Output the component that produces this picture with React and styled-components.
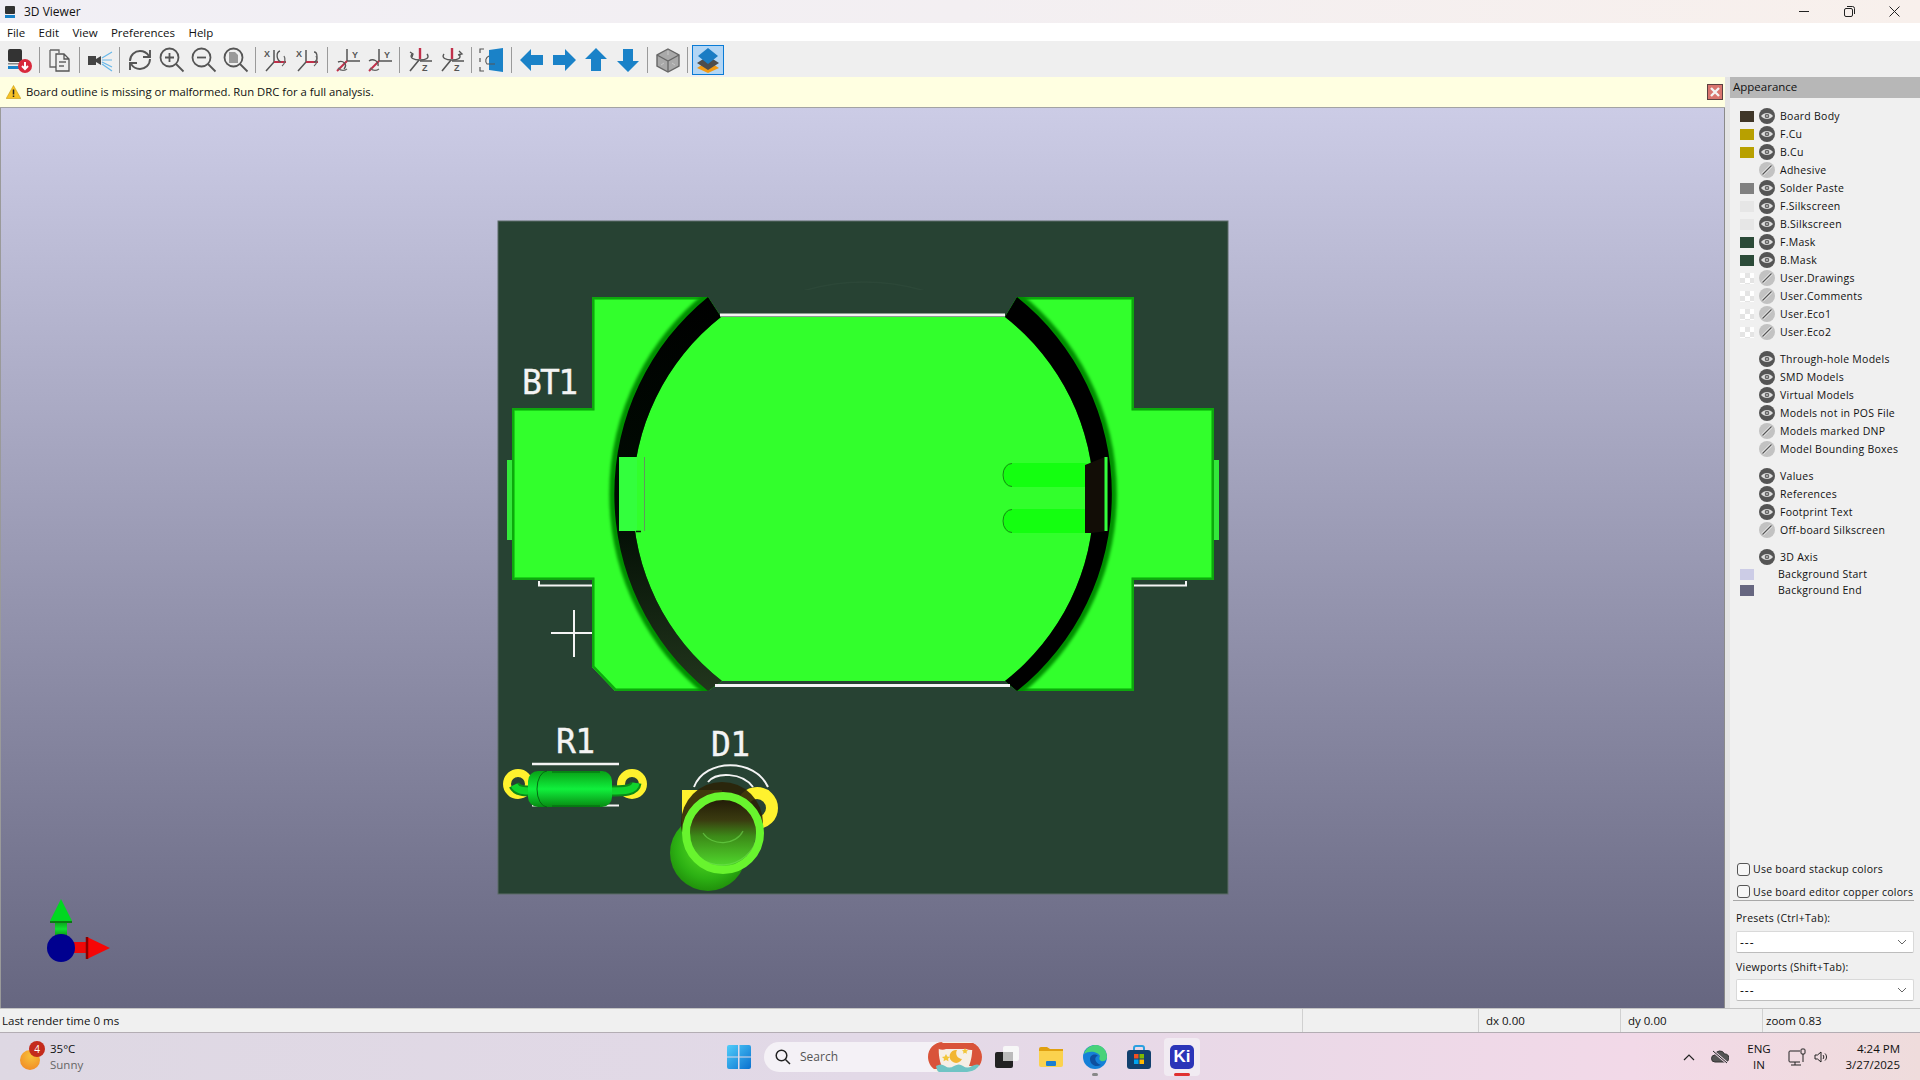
import React from "react"
import styled, { createGlobalStyle } from "styled-components"

const GlobalStyle = createGlobalStyle`
  html, body { margin: 0; padding: 0; background: #f0f0f0; overflow: hidden; }
  * { box-sizing: border-box; }
  #root { width: 1920px; height: 1080px; }
`

const UI_FONT = `"Open Sans", "Noto Sans", "Liberation Sans", sans-serif`

const Page = styled.div`
  width: 1920px;
  height: 1080px;
  display: flex;
  flex-direction: column;
  font-family: ${UI_FONT};
  font-size: 11.5px;
  color: #111;
  overflow: hidden;
`

const TitleBar = styled.div`
  height: 23px;
  flex: none;
  display: flex;
  align-items: center;
  padding-left: 5px;
  background: linear-gradient(90deg, #f1eff5 0%, #f3eff2 50%, #f8f0ec 100%);
  span { margin-left: 9px; font-size: 12px; }
`

const WindowButtons = styled.div`
  margin-left: auto;
  padding-right: 3px;
  display: flex;
  align-items: center;
`

const WindowButton = styled.div`
  width: 45px;
  height: 23px;
  display: flex;
  align-items: center;
  justify-content: center;
`

const MenuBar = styled.div`
  height: 18px;
  flex: none;
  display: flex;
  align-items: center;
  background: #fff;
  padding: 1px 0 0 7px;
  gap: 13.4px;
  font-size: 11.5px;
  span { line-height: 17px; }
`

const Toolbar = styled.div`
  height: 36px;
  flex: none;
  display: flex;
  align-items: center;
  background: #efefef;
  padding: 1px 0 0 4px;
`

const ToolButton = styled.div`
  width: 32px;
  height: 30px;
  display: flex;
  align-items: center;
  justify-content: center;
  border: 1px solid ${p => (p.$active ? "#0a7bd6" : "transparent")};
  background: ${p => (p.$active ? "#b3d6f5" : "transparent")};
`

const ToolSep = styled.div`
  width: 8px;
  height: 26px;
  flex: none;
  display: flex;
  justify-content: center;
  &::before { content: ""; width: 1px; height: 100%; background: #9a9a9a; margin-right: 1px; }
`

const Main = styled.div`
  flex: 1;
  min-height: 0;
  display: flex;
`

const ViewColumn = styled.div`
  width: 1725px;
  flex: none;
  display: flex;
  flex-direction: column;
`

const InfoBar = styled.div`
  height: 31px;
  flex: none;
  display: flex;
  align-items: center;
  padding: 0 2px 1px 6px;
  background: #ffffe1;
  border-bottom: 1px solid #a3a3a3;
  font-size: 11.3px;
  span { margin-left: 5px; }
`

const InfoClose = styled.div`
  margin-left: auto;
  width: 16px;
  height: 16px;
  display: flex;
  align-items: center;
  justify-content: center;
  background: #d9756e;
  border: 1px solid #5a4040;
`

const Viewport = styled.div`
  flex: 1;
  min-height: 0;
  background: linear-gradient(180deg, #cccce6 0%, #666680 100%);
  border-left: 1px solid #9a9a9a;
  border-right: 1px solid #8a8a8a;
  svg { display: block; width: 1725px; height: 900px; margin-left: -1px; }
`

const Sash = styled.div`
  width: 5px;
  flex: none;
  background: #e4e4e4;
`

const Panel = styled.div`
  flex: 1;
  min-width: 0;
  display: flex;
  flex-direction: column;
  background: #f0f0f0;
`

const PanelTitle = styled.div`
  height: 21px;
  flex: none;
  display: flex;
  align-items: center;
  padding: 0 0 2px 3px;
  background: #b7b7b7;
  font-size: 11.5px;
`

const LayerList = styled.div`
  padding: 9px 0 0 10px;
  display: flex;
  flex-direction: column;
  gap: 9px;
`

const LayerGroup = styled.div`
  display: flex;
  flex-direction: column;
`

const LayerRow = styled.div`
  height: ${p => (p.$short ? "16px" : "18px")};
  display: flex;
  align-items: center;
  font-size: 10.5px;
  letter-spacing: 0.27px;
`

const Swatch = styled.div`
  width: 14px;
  height: 11px;
  flex: none;
  margin-right: 5px;
  background: ${p => p.$color || "transparent"};
  ${p => p.$checker && `
    background: repeating-conic-gradient(#e4e4e4 0 25%, #ffffff 0 50%);
    background-size: 10px 10px;
  `}
`

const EyeSlot = styled.div`
  width: 16px;
  height: 16px;
  flex: none;
  margin-right: 5px;
  svg { display: block; }
`

const LayerLabel = styled.span`
  margin-left: ${p => (p.$indent ? "19px" : "0")};
`

const PanelBottom = styled.div`
  margin-top: auto;
  padding: 0 6px 7px 3px;
  display: flex;
  flex-direction: column;
  font-size: 10.5px;
  letter-spacing: 0.27px;
`

const CheckRow = styled.div`
  height: ${p => p.$h}px;
  display: flex;
  align-items: center;
  padding: ${p => p.$top || 0}px 0 0 4px;
`

const CheckBox = styled.div`
  width: 13px;
  height: 13px;
  margin-right: 3px;
  border: 1px solid #555;
  border-radius: 3px;
  background: #f6f6f6;
`

const PanelRule = styled.div`
  height: 1px;
  background: #a8a8a8;
`

const FieldLabel = styled.div`
  height: 16px;
  margin-top: ${p => p.$mt}px;
  padding-left: 3px;
  line-height: 16px;
`

const Select = styled.div`
  height: 22px;
  margin: ${p => p.$mt}px 0 0 3px;
  width: 178px;
  display: flex;
  align-items: center;
  justify-content: space-between;
  padding: 0 6px 0 3px;
  background: #fff;
  border: 1px solid #d9d9d9;
  border-bottom-color: #bdbdbd;
  border-radius: 2px;
  font-size: 12px;
  letter-spacing: 1px;
`

const StatusBar = styled.div`
  height: 25px;
  flex: none;
  display: flex;
  align-items: center;
  background: #f0f0f0;
  border-top: 1px solid #c4c4c4;
  border-bottom: 1px solid #b3adb3;
  font-size: 11.5px;
`

const StatusField = styled.div`
  width: ${p => p.$w}px;
  flex: ${p => (p.$grow ? 1 : "none")};
  height: 100%;
  display: flex;
  align-items: center;
  padding-left: ${p => p.$pad}px;
  border-left: ${p => (p.$first ? "none" : "1px solid #d0d0d0")};
`

const Taskbar = styled.div`
  height: 47px;
  flex: none;
  display: flex;
  align-items: center;
  background: linear-gradient(90deg, #ded8e3 0%, #e2d9e7 45%, #f2d9e8 85%, #efdcdc 100%);
`

const WeatherArea = styled.div`
  width: 727px;
  flex: none;
  display: flex;
  align-items: center;
  padding-left: 20px;
`

const WeatherIcon = styled.div`
  position: relative;
  width: 20px;
  height: 20px;
  margin: 6px 10px 0 0;
  border-radius: 50%;
  background: radial-gradient(circle at 55% 30%, #f7c23a, #f08020);
`

const WeatherBadge = styled.div`
  position: absolute;
  top: -9px;
  left: 9px;
  width: 16px;
  height: 16px;
  border-radius: 50%;
  background: #c42b1c;
  color: #fff;
  font-size: 10px;
  line-height: 16px;
  text-align: center;
`

const TwoLines = styled.div`
  display: flex;
  flex-direction: column;
  align-items: ${p => p.$align || "flex-start"};
  font-size: 11.5px;
  line-height: 16px;
`

const Muted = styled.span`
  color: #666;
`

const TaskCenter = styled.div`
  display: flex;
  align-items: center;
`

const TaskIcon = styled.div`
  width: ${p => p.$w || 44}px;
  height: 38px;
  flex: none;
  margin-left: ${p => (p.$active ? "3px" : "0")};
  display: flex;
  align-items: center;
  justify-content: center;
  position: relative;
  border-radius: 4px;
  background: ${p => (p.$active ? "#f1ebf2" : "transparent")};
`

const RunDot = styled.div`
  position: absolute;
  bottom: 0;
  left: 50%;
  transform: translateX(-50%);
  width: ${p => p.$w}px;
  height: 3px;
  border-radius: 2px;
  background: ${p => p.$color};
`

const SearchPill = styled.div`
  width: 218px;
  height: 30px;
  margin: 0 3px 0 13px;
  display: flex;
  align-items: center;
  padding-left: 11px;
  background: #f4f1f6;
  border-radius: 15px;
  overflow: hidden;
  font-size: 12px;
  color: #555;
  span { margin-left: 9px; }
  svg:last-child { margin-left: auto; }
`

const Tray = styled.div`
  margin-left: auto;
  display: flex;
  align-items: center;
  padding-right: 20px;
`

const TraySlot = styled.div`
  width: ${p => p.$w}px;
  display: flex;
  justify-content: ${p => p.$end ? "flex-end" : "center"};
  text-align: center;
`

/* ---- toolbar drawings ---- */
const Ico = ({ children, w = 26, h = 26 }) => (
  <svg width={w} height={h} viewBox={`0 0 ${w} ${h}`} fill="none">{children}</svg>
)

const ExportIcon = () => (
  <Ico>
    <rect x="1" y="2" width="14" height="13" rx="2" fill="#333" />
    <rect x="1" y="16" width="14" height="1.5" fill="#888" />
    <rect x="1" y="19" width="14" height="3" fill="#1a82c8" />
    <circle cx="18" cy="19" r="7" fill="#d8293c" />
    <path d="M18 15v6M15 19l3 3 3-3" stroke="#fff" strokeWidth="2" />
  </Ico>
)

const CopyIcon = () => (
  <Ico>
    <path d="M3 3h9l0 3M9 20H3V3" stroke="#666" strokeWidth="1.3" />
    <path d="M9 7h8l5 5v12H9z M17 7v5h5" stroke="#555" strokeWidth="1.3" fill="#efefef" />
    <path d="M12 15h7M12 19h5" stroke="#666" strokeWidth="1.3" />
  </Ico>
)

const CameraIcon = () => (
  <Ico>
    <rect x="1" y="9" width="8" height="9" fill="#444" />
    <path d="M9 12l5-3v9l-5-3z" fill="#444" />
    <path d="M15 11l10-6M15 13h10M15 15l10 5M15 17l10 7" stroke="#68b8ea" strokeWidth="1.2" />
  </Ico>
)

const RefreshIcon = () => (
  <Ico>
    <path d="M3 14C3 8 8 4 13 4c4 0 7 2 9 5" stroke="#555" strokeWidth="1.9" />
    <path d="M23 3v7h-7" stroke="#555" strokeWidth="1.9" />
    <path d="M23 12c0 6-5 10-10 10-4 0-7-2-9-5" stroke="#555" strokeWidth="1.9" />
    <path d="M3 23v-7h7" stroke="#555" strokeWidth="1.9" />
  </Ico>
)

const Magnifier = ({ children }) => (
  <Ico>
    <circle cx="10.5" cy="10.5" r="9" stroke="#555" strokeWidth="1.8" fill="#efefef" />
    <path d="M17 17l7.5 7.5" stroke="#555" strokeWidth="1.8" />
    {children}
  </Ico>
)

const AxisIcon = ({ axis, rev }) => {
  const curl = rev ? "M19 5c4 0 4 9 0 10" : "M17 4c-4 1-4 9 1 11"
  if (axis === "X") return (
    <Ico>
      <text x="1" y="10" fontFamily="Liberation Sans" fontSize="9" fontWeight="700" fill="#555">X</text>
      <path d="M11 3v12M11 15L3 24" stroke="#555" strokeWidth="1.5" />
      <path d="M11 15h12" stroke="#c0304a" strokeWidth="2" />
      <path d={curl} stroke="#555" strokeWidth="1.3" />
      <path d="M21 9c2 3 1 8-2 10" stroke="#666" strokeWidth="1.3" />
    </Ico>
  )
  if (axis === "Y") return (
    <Ico>
      <text x="17" y="11" fontFamily="Liberation Sans" fontSize="9" fontWeight="700" fill="#555">Y</text>
      <path d="M12 2v12h13" stroke="#555" strokeWidth="1.5" />
      <path d="M12 14L2 24" stroke="#c0304a" strokeWidth="2" />
      <path d={rev ? "M2 14c4-3 10 0 9 5" : "M3 15c5-2 10 2 6 7"} stroke="#555" strokeWidth="1.4" />
      <path d="M3 21c3 3 6 3 9 1" stroke="#666" strokeWidth="1.3" />
    </Ico>
  )
  return (
    <Ico>
      <text x="15" y="24" fontFamily="Liberation Sans" fontSize="9" fontWeight="700" fill="#555">Z</text>
      <path d="M13 1v11" stroke="#c0304a" strokeWidth="2.4" />
      <path d="M12 13L3 24M13 14h12" stroke="#555" strokeWidth="1.6" />
      <path d="M5 7c-3 4 2 6 8 6s10-2 7-6" stroke="#555" strokeWidth="1.4" />
      <path d={rev ? "M20 4l3 3-4 1" : "M3 5l3 2-1 3"} stroke="#555" strokeWidth="1.3" />
    </Ico>
  )
}

const FlipIcon = () => (
  <Ico>
    <path d="M10 3l14 -2v24l-14-2z" fill="#1a82c8" />
    <path d="M5 2H1v4M1 11v4M1 20v4h4" stroke="#555" strokeWidth="1.2" />
    <path d="M10 9a5 5 0 0 0-2 8h8" stroke="#555" strokeWidth="1.1" />
  </Ico>
)

const Arrow = ({ dir }) => {
  const rot = { left: 180, right: 0, up: -90, down: 90 }[dir]
  return (
    <Ico>
      <g transform={`rotate(${rot} 13 13)`}>
        <path d="M2 8h12V2l11 11-11 11v-6H2z" fill="#1a82c8" />
      </g>
    </Ico>
  )
}

const CubeIcon = () => (
  <Ico>
    <path d="M13 2l11 6v11l-11 6-11-6V8z" fill="#a9a9a9" stroke="#666" strokeWidth="1.4" />
    <path d="M2 8l11 6 11-6M13 14v11" stroke="#666" strokeWidth="1.3" />
    <path d="M13 4v4M6 18l3-2M20 18l-3-2" stroke="#c8c8c8" strokeWidth="1" />
  </Ico>
)

const LayersIcon = () => (
  <Ico>
    <path d="M13 14l11 7-11 5-11-5z" fill="#f39a12" />
    <path d="M13 9l11 7-11 7-11-7z" fill="#4d4d4d" />
    <path d="M13 1l10 8-10 8-10-8z" fill="#1a7cc4" />
  </Ico>
)

/* ---- panel drawings ---- */
const Eye = ({ off }) => off ? (
  <svg width="16" height="16" viewBox="0 0 16 16">
    <circle cx="8" cy="8" r="8" fill="#c2c2c2" />
    <path d="M3.5 12.5l9-9" stroke="#f0f0f0" strokeWidth="3" />
    <path d="M3.5 12.5l9-9" stroke="#555" strokeWidth="1.3" />
  </svg>
) : (
  <svg width="16" height="16" viewBox="0 0 16 16">
    <circle cx="8" cy="8" r="8" fill="#555" />
    <path d="M2 8c3-4 9-4 12 0-3 4-9 4-12 0z" fill="#ddd" />
    <circle cx="8" cy="8" r="2.3" fill="#666" />
    <circle cx="8" cy="8" r="1" fill="#bbb" />
  </svg>
)

const Chevron = () => (
  <svg width="10" height="6" viewBox="0 0 10 6" fill="none">
    <path d="M1 1l4 4 4-4" stroke="#666" strokeWidth="1" />
  </svg>
)

const LAYERS = [
  { n: "Board Body", c: "#3f3628" },
  { n: "F.Cu", c: "#b8a000" },
  { n: "B.Cu", c: "#b8a000" },
  { n: "Adhesive", off: true },
  { n: "Solder Paste", c: "#808080" },
  { n: "F.Silkscreen", c: "#e6e6e6" },
  { n: "B.Silkscreen", c: "#e6e6e6" },
  { n: "F.Mask", c: "#2b4a38" },
  { n: "B.Mask", c: "#2b4a38" },
  { n: "User.Drawings", check: true, off: true },
  { n: "User.Comments", check: true, off: true },
  { n: "User.Eco1", check: true, off: true },
  { n: "User.Eco2", check: true, off: true },
]

const MODELS = [
  { n: "Through-hole Models" },
  { n: "SMD Models" },
  { n: "Virtual Models" },
  { n: "Models not in POS File" },
  { n: "Models marked DNP", off: true },
  { n: "Model Bounding Boxes", off: true },
]

const TEXTS = [
  { n: "Values" },
  { n: "References" },
  { n: "Footprint Text" },
  { n: "Off-board Silkscreen", off: true },
]

const Layer = ({ n, c, off, check }) => (
  <LayerRow>
    <Swatch $color={c} $checker={check} />
    <EyeSlot><Eye off={off} /></EyeSlot>
    <span>{n}</span>
  </LayerRow>
)

/* ---- the 3D view, in page coordinates ---- */
const PCB_OUTLINE = "M592 297H708L721 317H1005L1017 297H1134V408H1214V580H1134V691H1017L1005 681H722L708 691H615L592 667V580H512V408H592Z"
const CENTER = "M721 317H1005A231 231 0 0 1 1005 681H722A231 231 0 0 1 721 317Z"
const RING_L = "M708 297A254 254 0 0 0 708 691L722 681A231 231 0 0 1 721 317Z"
const RING_R = "M1017 297A252 252 0 0 1 1017 691L1005 681A231 231 0 0 0 1005 317Z"
const GREEN = "#32ff2c"
const SILK = "#f4f4f4"
const BoardText = styled.text`
  font-family: "DejaVu Sans Mono", monospace;
  fill: #f4f4f4;
  stroke: #f4f4f4;
  stroke-width: 0.35;
`

const BoardView = () => (
  <svg viewBox="0 108 1725 900" fill="none">
    <defs>
      <clipPath id="pcbClip"><path d={PCB_OUTLINE} /></clipPath>
      <clipPath id="boardTop"><rect x="498" y="221" width="730" height="74" /></clipPath>
      <clipPath id="ledTop"><rect x="660" y="770" width="120" height="62" /></clipPath>
      <filter id="soft" x="-10%" y="-10%" width="120%" height="120%"><feGaussianBlur stdDeviation="1.8" /></filter>
      <filter id="softer" x="-10%" y="-10%" width="120%" height="120%"><feGaussianBlur stdDeviation="0.7" /></filter>
      <linearGradient id="ringL" x1="0" y1="0" x2="0" y2="1">
        <stop offset="0" stopColor="#000" />
        <stop offset="0.55" stopColor="#010c03" />
        <stop offset="1" stopColor="#22361d" />
      </linearGradient>
      <linearGradient id="resistor" x1="0" y1="0" x2="0" y2="1">
        <stop offset="0" stopColor="#08a016" />
        <stop offset="0.5" stopColor="#10f03c" />
        <stop offset="1" stopColor="#078a12" />
      </linearGradient>
      <radialGradient id="ledBall" cx="0.5" cy="0.42" r="0.6">
        <stop offset="0" stopColor="#5fe62a" />
        <stop offset="0.7" stopColor="#2cb013" />
        <stop offset="1" stopColor="#1f8c0a" />
      </radialGradient>
      <linearGradient id="ledInner" x1="0" y1="0" x2="0" y2="1">
        <stop offset="0" stopColor="#231d07" />
        <stop offset="0.3" stopColor="#3a3a10" />
        <stop offset="0.55" stopColor="#3c8a18" />
        <stop offset="1" stopColor="#50d82c" />
      </linearGradient>
      <linearGradient id="tube" x1="0" y1="0" x2="0" y2="1">
        <stop offset="0" stopColor="#0a9a1a" />
        <stop offset="0.5" stopColor="#10e030" />
        <stop offset="1" stopColor="#0a8a12" />
      </linearGradient>
    </defs>

    <rect x="498" y="221" width="730" height="673" fill="#274233" stroke="#5c6a68" strokeWidth="1" />
    <circle cx="864" cy="499" r="212" stroke="#2f4a3b" strokeWidth="1.5" opacity="0.7" clipPath="url(#boardTop)" transform="translate(0 -5)" />

    {/* battery holder */}
    <path d="M539 581V585.5H592M1134 585.5H1186V581" stroke={SILK} strokeWidth="2" />
    <path d="M551 633H592M574 610V657" stroke={SILK} strokeWidth="2" />
    <rect x="507" y="460" width="5" height="80" fill="#33e83a" />
    <rect x="1214" y="460" width="5" height="80" fill="#33e83a" />
    <path d={PCB_OUTLINE} fill={GREEN} />
    <path d={PCB_OUTLINE} stroke="#0aa80d" strokeWidth="5" clipPath="url(#pcbClip)" filter="url(#softer)" />
    <path d={RING_L} stroke="#049006" strokeWidth="10" filter="url(#soft)" clipPath="url(#pcbClip)" />
    <path d={RING_R} stroke="#049006" strokeWidth="10" filter="url(#soft)" clipPath="url(#pcbClip)" />
    <path d={CENTER} fill={GREEN} />
    <path d={RING_L} fill="url(#ringL)" />
    <path d={RING_R} fill="#000" />
    <path d="M720 315H1005" stroke={SILK} strokeWidth="3" />
    <path d="M715 685.5H1010" stroke={SILK} strokeWidth="3" />
    <rect x="619" y="457" width="18" height="74" fill="#33ff3d" />
    <rect x="637" y="457" width="7" height="74" fill={GREEN} />
    <path d="M644.5 457V531" stroke="#5f9a5c" strokeWidth="1" />
    <path d="M636 531.5H641" stroke="#0a1a08" strokeWidth="1.5" />
    <rect x="1003" y="463" width="90" height="24" rx="9" fill="#14ff10" />
    <rect x="1003" y="509" width="90" height="24" rx="9" fill="#14ff10" />
    <path d="M1012 463.5a9 11.5 0 0 0 0 23M1012 509.5a9 11.5 0 0 0 0 23" stroke="#1a6a18" strokeWidth="0.8" />
    <path d="M1085 465L1105 457H1108V531L1091 533H1085Z" fill="#120d06" />
    <rect x="1104.5" y="457" width="3" height="74" fill="#33ff3d" />

    <BoardText x="522" y="394" fontSize="33" textLength="56">BT1</BoardText>

    {/* R1 */}
    <BoardText x="556" y="753" fontSize="33" textLength="39">R1</BoardText>
    <path d="M532 764H619" stroke={SILK} strokeWidth="2.5" />
    <path d="M532 805.5H619" stroke={SILK} strokeWidth="2" />
    <circle cx="518" cy="784" r="11" stroke="#fff22e" strokeWidth="8" />
    <circle cx="632" cy="784" r="11" stroke="#fff22e" strokeWidth="8" />
    <path d="M514 785c3 6 10 6 18 6M636 783c-1 8-12 8-26 8" stroke="#0a8a18" strokeWidth="11" />
    <path d="M514 785c3 6 10 6 18 6M636 783c-1 8-12 8-26 8" stroke="#10d42c" strokeWidth="7" />
    <rect x="528" y="771" width="84" height="36" rx="10" fill="url(#resistor)" />
    <path d="M547 771a10 18 0 0 0 0 36M552 772h48M552 806h48" stroke="#046010" strokeWidth="0.9" />

    {/* D1 */}
    <BoardText x="711" y="756" fontSize="33" textLength="39">D1</BoardText>
    <path d="M694 787C705 758 755 758 768 787" stroke={SILK} strokeWidth="2" />
    <path d="M708 782C716 772 742 772 753 787" stroke={SILK} strokeWidth="2" />
    <rect x="682" y="790" width="40" height="40" fill="#fff22e" />
    <circle cx="757" cy="808" r="15" stroke="#fff22e" strokeWidth="12" />
    <circle cx="708" cy="853" r="38" fill="url(#ledBall)" />
    <circle cx="722" cy="823" r="41" fill="#2b2408" opacity="0.9" clipPath="url(#ledTop)" />
    <circle cx="723" cy="833" r="33" fill="url(#ledInner)" />
    <path d="M687 841a36 34 0 0 0 70 -5M703 833a22 18 0 0 0 40 -2" stroke="#7ae85a" strokeWidth="1.3" opacity="0.5" />
    <circle cx="723" cy="833" r="37" stroke="#68f42e" strokeWidth="8" />

    {/* axis */}
    <rect x="55" y="921" width="12" height="16" fill="url(#tube)" />
    <path d="M61 899L72 921H50Z" fill="#00d820" />
    <path d="M50 921H72V923H50Z" fill="#0a7a12" />
    <rect x="72" y="942" width="17" height="11" fill="#f00808" />
    <path d="M110 948L87 937V959Z" fill="#f60606" />
    <path d="M87 937V959" stroke="#800" strokeWidth="2.5" />
    <circle cx="61" cy="948" r="14" fill="#00008f" />
  </svg>
)

/* ---- taskbar drawings ---- */
const WinLogo = () => (
  <svg width="24" height="24" viewBox="0 0 24 24">
    <defs>
      <linearGradient id="win" x1="0" y1="0" x2="1" y2="1">
        <stop offset="0" stopColor="#50cdfa" />
        <stop offset="1" stopColor="#0a70cf" />
      </linearGradient>
    </defs>
    <path d="M0 2a2 2 0 0 1 2-2h9v11.4H0zM12.500 0H22a2 2 0 0 1 2 2v9.400H12.500zM0 12.600h11V24H2a2 2 0 0 1-2-2zM12.500 12.600H24V22a2 2 0 0 1-2 2h-9.500z" fill="url(#win)" />
  </svg>
)

const SearchGlass = () => (
  <svg width="16" height="16" viewBox="0 0 16 16" fill="none">
    <circle cx="6.500" cy="6.500" r="5.300" stroke="#222" strokeWidth="1.500" />
    <path d="M10.500 10.500l4.500 4.500" stroke="#222" strokeWidth="1.500" />
  </svg>
)

const SearchArt = () => (
  <svg width="54" height="30" viewBox="0 0 54 30">
    <path d="M15 0h39v30H12C4 30 0 22 0 15S6 0 15 0z" fill="#f6efe6" />
    <path d="M10 1h44v3C48 8 44 9 38 7H18C14 9 10 7 6 4z" fill="#d9533a" />
    <path d="M15 0C6 0 0 7 0 15c0 5 3 10 6 12h9c-3-6-5-14-4-24z M54 1H44c1 10-1 18-3 23h13z" fill="#d9533a" />
    <path d="M8 24q5-3 9 0t9 0 9 0 9 0 10 0v6H12c-2 0-3-1-4-6z" fill="#6fc4c4" />
    <path d="M29 8a6.500 6.500 0 1 0 5 9 6 6 0 0 1-5-9z" fill="#f2b632" />
    <path d="M18 12l1.300 2.500 2.700.4-2 1.800.5 2.600-2.500-1.300-2.500 1.300.5-2.600-2-1.800 2.700-.4zM37 6l1 2 2 .3-1.500 1.400.4 2-1.900-1-1.900 1 .4-2L34 8.300l2-.3z" fill="#f2c63a" />
  </svg>
)

const TaskViewIcon = () => (
  <svg width="24" height="22" viewBox="0 0 24 22">
    <rect x="8" y="0" width="16" height="15" rx="2" fill="#f7f7f7" />
    <rect x="0" y="6" width="18" height="16" rx="2" fill="#222" />
    <rect x="8" y="6" width="10" height="9" fill="#bbb" />
  </svg>
)

const FolderIcon = () => (
  <svg width="24" height="20" viewBox="0 0 24 20">
    <path d="M0 2a2 2 0 0 1 2-2h6l3 2h13v4H0z" fill="#e0a010" />
    <path d="M0 4h24v14a2 2 0 0 1-2 2H2a2 2 0 0 1-2-2z" fill="#fbd24e" />
    <rect x="7" y="14" width="10" height="5" rx="1" fill="#1c7fd0" />
  </svg>
)

const EdgeIcon = () => (
  <svg width="24" height="24" viewBox="0 0 24 24">
    <circle cx="12" cy="12" r="12" fill="#1580d8" />
    <path d="M1 9C3 2 9 0 13 0c6 0 11 5 11 12 0 3-3 5-6 4-2-1-2-3-1-5C15 7 7 5 1 9z" fill="#48d27a" />
    <path d="M7 14c0-4 5-6 8-3-4 0-4 7 3 9-6 3-11-1-11-6z" fill="#0e4fa0" />
  </svg>
)

const StoreIcon = () => (
  <svg width="24" height="24" viewBox="0 0 24 24" fill="none">
    <path d="M7 6V3a2 2 0 0 1 2-2h6a2 2 0 0 1 2 2v3" stroke="#2aa0e0" strokeWidth="2" />
    <rect y="5" width="24" height="19" rx="3" fill="#12406e" />
    <rect x="7" y="9" width="4.500" height="4.500" fill="#f25022" />
    <rect x="12.500" y="9" width="4.500" height="4.500" fill="#7fba00" />
    <rect x="7" y="14.500" width="4.500" height="4.500" fill="#00a4ef" />
    <rect x="12.500" y="14.500" width="4.500" height="4.500" fill="#ffb900" />
  </svg>
)

const KiBadge = styled.div`
  width: 24px;
  height: 24px;
  border-radius: 5px;
  background: #2b35b8;
  color: #fff;
  font: 700 17px/24px "Liberation Sans", sans-serif;
  text-align: center;
`

const TitleChip = () => (
  <svg width="10" height="12" viewBox="0 0 10 12">
    <rect width="10" height="8" rx="1" fill="#333" />
    <rect y="9" width="10" height="3" fill="#1a82c8" />
  </svg>
)

const App = () => (
  <Page>
    <GlobalStyle />
    <TitleBar>
      <TitleChip />
      <span>3D Viewer</span>
      <WindowButtons>
        <WindowButton>
          <svg width="11" height="11" viewBox="0 0 11 11"><path d="M0 5.500h10" stroke="#222" /></svg>
        </WindowButton>
        <WindowButton>
          <svg width="11" height="11" viewBox="0 0 11 11" fill="none"><rect x="0.500" y="2.500" width="8" height="8" rx="1.500" stroke="#222" /><path d="M3 .5h5.500a2 2 0 0 1 2 2V8" stroke="#222" /></svg>
        </WindowButton>
        <WindowButton>
          <svg width="11" height="11" viewBox="0 0 11 11"><path d="M.5.500l10 10M10.500.500l-10 10" stroke="#222" /></svg>
        </WindowButton>
      </WindowButtons>
    </TitleBar>

    <MenuBar>
      <span>File</span><span>Edit</span><span>View</span><span>Preferences</span><span>Help</span>
    </MenuBar>

    <Toolbar>
      <ToolButton><ExportIcon /></ToolButton>
      <ToolSep />
      <ToolButton><CopyIcon /></ToolButton>
      <ToolSep />
      <ToolButton><CameraIcon /></ToolButton>
      <ToolSep />
      <ToolButton><RefreshIcon /></ToolButton>
      <ToolButton><Magnifier><path d="M6 10.500h9M10.500 6v9" stroke="#555" strokeWidth="1.800" /></Magnifier></ToolButton>
      <ToolButton><Magnifier><path d="M6 10.500h9" stroke="#555" strokeWidth="1.800" /></Magnifier></ToolButton>
      <ToolButton><Magnifier><path d="M6 5h6l3 3v8H6z" fill="#999" /></Magnifier></ToolButton>
      <ToolSep />
      <ToolButton><AxisIcon axis="X" /></ToolButton>
      <ToolButton><AxisIcon axis="X" rev /></ToolButton>
      <ToolSep />
      <ToolButton><AxisIcon axis="Y" /></ToolButton>
      <ToolButton><AxisIcon axis="Y" rev /></ToolButton>
      <ToolSep />
      <ToolButton><AxisIcon axis="Z" /></ToolButton>
      <ToolButton><AxisIcon axis="Z" rev /></ToolButton>
      <ToolSep />
      <ToolButton><FlipIcon /></ToolButton>
      <ToolSep />
      <ToolButton><Arrow dir="left" /></ToolButton>
      <ToolButton><Arrow dir="right" /></ToolButton>
      <ToolButton><Arrow dir="up" /></ToolButton>
      <ToolButton><Arrow dir="down" /></ToolButton>
      <ToolSep />
      <ToolButton><CubeIcon /></ToolButton>
      <ToolSep />
      <ToolButton $active><LayersIcon /></ToolButton>
    </Toolbar>

    <Main>
      <ViewColumn>
        <InfoBar>
          <svg width="15" height="14" viewBox="0 0 15 14">
            <path d="M7.500.500L14.800 13.500H.2z" fill="#f7c325" stroke="#c89a10" strokeWidth="0.600" />
            <path d="M7.500 4.500v5M7.500 10.500v1.500" stroke="#222" strokeWidth="1.500" />
          </svg>
          <span>Board outline is missing or malformed. Run DRC for a full analysis.</span>
          <InfoClose>
            <svg width="12" height="10" viewBox="0 0 12 10"><path d="M2 1l8 8M10 1l-8 8" stroke="#f4f4f4" strokeWidth="2.400" /></svg>
          </InfoClose>
        </InfoBar>
        <Viewport><BoardView /></Viewport>
      </ViewColumn>
      <Sash />
      <Panel>
        <PanelTitle>Appearance</PanelTitle>
        <LayerList>
          <LayerGroup>{LAYERS.map(l => <Layer key={l.n} {...l} />)}</LayerGroup>
          <LayerGroup>{MODELS.map(l => <Layer key={l.n} {...l} />)}</LayerGroup>
          <LayerGroup>{TEXTS.map(l => <Layer key={l.n} {...l} />)}</LayerGroup>
          <LayerGroup>
            <Layer n="3D Axis" />
            <LayerRow $short><Swatch $color="#cccce6" /><LayerLabel $indent>Background Start</LayerLabel></LayerRow>
            <LayerRow $short><Swatch $color="#666680" /><LayerLabel $indent>Background End</LayerLabel></LayerRow>
          </LayerGroup>
        </LayerList>
        <PanelBottom>
          <CheckRow $h={22}><CheckBox />Use board stackup colors</CheckRow>
          <CheckRow $h={20} $top={3}><CheckBox />Use board editor copper colors</CheckRow>
          <PanelRule />
          <FieldLabel $mt={9}>Presets (Ctrl+Tab):</FieldLabel>
          <Select $mt={5}>---<Chevron /></Select>
          <FieldLabel $mt={6}>Viewports (Shift+Tab):</FieldLabel>
          <Select $mt={4}>---<Chevron /></Select>
        </PanelBottom>
      </Panel>
    </Main>

    <StatusBar>
      <StatusField $first $w={1302} $pad={2}>Last render time 0 ms</StatusField>
      <StatusField $w={176} />
      <StatusField $w={142} $pad={7}>dx 0.00</StatusField>
      <StatusField $w={142} $pad={7}>dy 0.00</StatusField>
      <StatusField $grow $pad={3}>zoom 0.83</StatusField>
    </StatusBar>

    <Taskbar>
      <WeatherArea>
        <WeatherIcon><WeatherBadge>4</WeatherBadge></WeatherIcon>
        <TwoLines><span>35°C</span><Muted>Sunny</Muted></TwoLines>
      </WeatherArea>
      <TaskCenter>
        <WinLogo />
        <SearchPill><SearchGlass /><span>Search</span><SearchArt /></SearchPill>
        <TaskIcon><TaskViewIcon /></TaskIcon>
        <TaskIcon><FolderIcon /></TaskIcon>
        <TaskIcon><EdgeIcon /><RunDot $w={6} $color="#888" /></TaskIcon>
        <TaskIcon><StoreIcon /></TaskIcon>
        <TaskIcon $active $w={36}><KiBadge>Ki</KiBadge><RunDot $w={16} $color="#e03030" /></TaskIcon>
      </TaskCenter>
      <Tray>
        <TraySlot $w={30}>
          <svg width="12" height="8" viewBox="0 0 12 8" fill="none"><path d="M1 7l5-5 5 5" stroke="#222" strokeWidth="1.200" /></svg>
        </TraySlot>
        <TraySlot $w={32}>
          <svg width="18" height="14" viewBox="0 0 18 14" fill="none"><path d="M4 12a3.500 3.500 0 0 1 0-7 5 5 0 0 1 9.500-1A4 4 0 0 1 14 12z" fill="#555" stroke="#333" /><path d="M2 1l14 12" stroke="#f0dce8" strokeWidth="2.500" /><path d="M2 1l14 12" stroke="#222" /></svg>
        </TraySlot>
        <TraySlot $w={46}><TwoLines $align="center"><span>ENG</span><span>IN</span></TwoLines></TraySlot>
        <TraySlot $w={30}>
          <svg width="18" height="18" viewBox="0 0 18 18" fill="none"><path d="M12 3H2a1 1 0 0 0-1 1v9a1 1 0 0 0 1 1h10M7 14v3M3 17h10" stroke="#222" /><rect x="13" y="1" width="4" height="5" rx="1" stroke="#222" /><path d="M15 6v8" stroke="#222" /></svg>
        </TraySlot>
        <TraySlot $w={18}>
          <svg width="15" height="14" viewBox="0 0 15 14" fill="none"><path d="M1 5v4h2.500L7 12V2L3.500 5z" stroke="#222" /><path d="M9 5c1 1 1 3 0 4M11 3.500c2 2 2 5 0 7" stroke="#222" /></svg>
        </TraySlot>
        <TraySlot $w={70} $end><TwoLines $align="flex-end"><span>4:24 PM</span><span>3/27/2025</span></TwoLines></TraySlot>
      </Tray>
    </Taskbar>
  </Page>
)

export default App
